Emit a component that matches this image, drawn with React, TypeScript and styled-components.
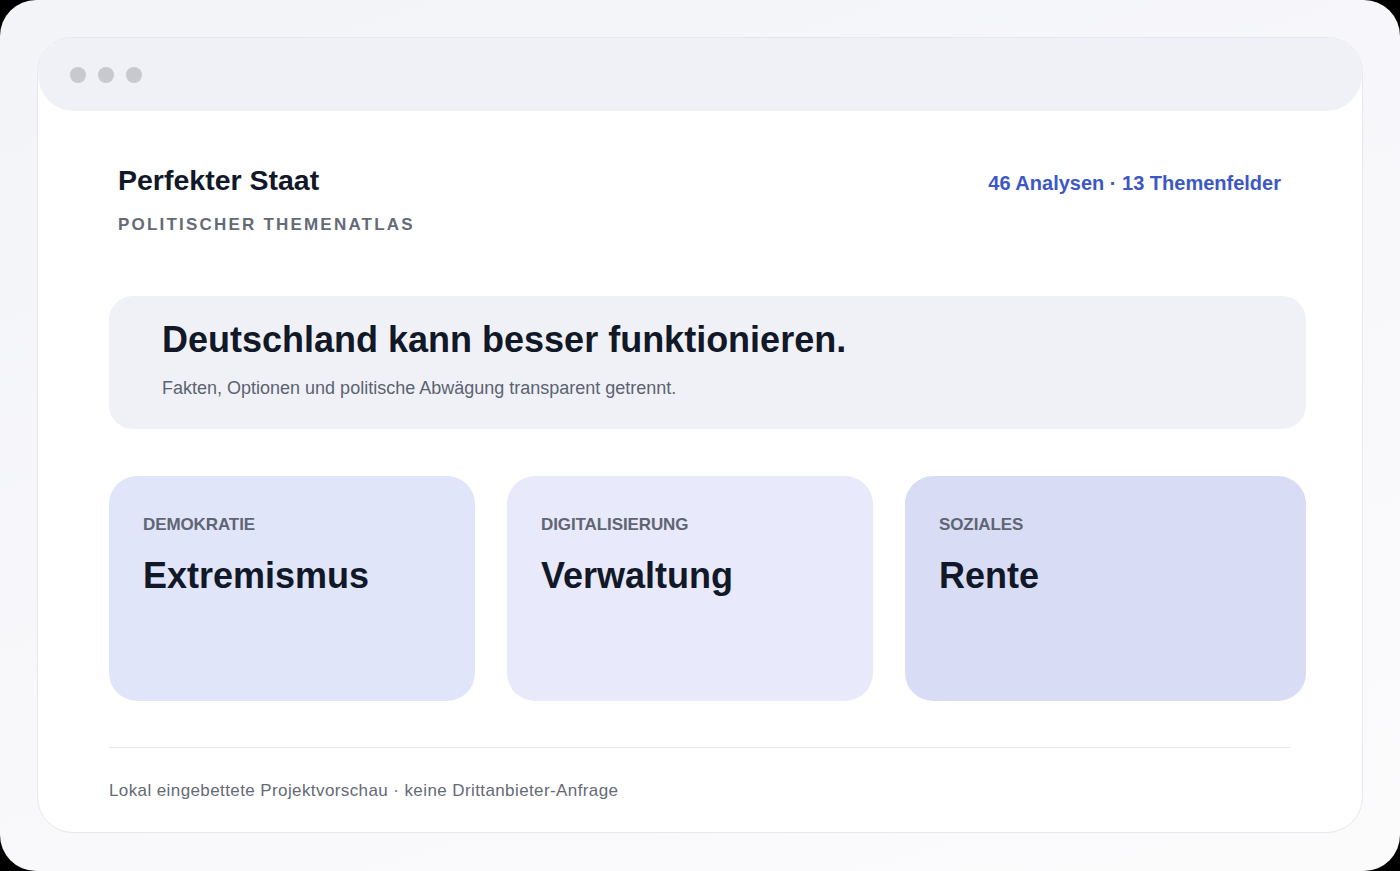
import styled, { createGlobalStyle } from "styled-components";

const TOPICS = [
  { id: 1, area: "Demokratie", title: "Extremismus", tone: "#e0e5fa" },
  { id: 2, area: "Digitalisierung", title: "Verwaltung", tone: "#e8e9fa" },
  { id: 3, area: "Soziales", title: "Rente", tone: "#d8dcf5" },
];

const GlobalStyle = createGlobalStyle`
  html, body {
    margin: 0;
    padding: 0;
    background: #000;
  }
  body {
    font-family: "Liberation Sans", Arial, sans-serif;
  }
  * {
    box-sizing: border-box;
  }
`;

const Frame = styled("div")`
  width: 1400px;
  height: 871px;
  border-radius: 36px;
  background: linear-gradient(160deg, #f3f4f8 0%, #f8f8fb 55%, #fbfbfc 100%);
  padding: 37px 37px 38px 37px;
`;

const Window = styled("div")`
  height: 100%;
  background: #ffffff;
  border: 1px solid #e6e8ee;
  border-radius: 36px;
  display: flex;
  flex-direction: column;
`;

const TitleBar = styled("div")`
  height: 73px;
  flex-shrink: 0;
  background: #f0f1f6;
  border-radius: 36px;
  display: flex;
  align-items: center;
  gap: 12px;
  padding-left: 32px;
`;

const Dot = styled("span")`
  width: 16px;
  height: 16px;
  border-radius: 50%;
  background: #c7c9cf;
`;

const Content = styled("div")`
  flex: 1;
  padding: 52px 56px 0 71px;
  display: flex;
  flex-direction: column;
`;

const Header = styled("header")`
  display: flex;
  justify-content: space-between;
  align-items: flex-start;
  padding: 0 25px 0 9px;
`;

const Brand = styled("div")`
  display: flex;
  flex-direction: column;
`;

const BrandName = styled("h1")`
  margin: 0;
  font-size: 28.5px;
  line-height: 34px;
  font-weight: 700;
  color: #111827;
`;

const BrandTag = styled("div")`
  margin-top: 18px;
  font-size: 17px;
  line-height: 20px;
  font-weight: 700;
  letter-spacing: 2.2px;
  color: #646a76;
`;

const Stats = styled("div")`
  margin-top: 5px;
  font-size: 20px;
  line-height: 30px;
  font-weight: 700;
  color: #3d58c6;
`;

const Hero = styled("section")`
  margin-top: 61px;
  background: #f0f1f6;
  border-radius: 24px;
  padding: 23px 53px 27px;
`;

const HeroTitle = styled("h2")`
  margin: 0;
  font-size: 36px;
  line-height: 41px;
  font-weight: 700;
  color: #111827;
`;

const HeroText = styled("p")`
  margin: 15px 0 0;
  font-size: 18px;
  line-height: 27px;
  color: #5b6271;
`;

const Cards = styled("div")`
  margin-top: 47px;
  display: grid;
  grid-template-columns: 366px 366px 1fr;
  gap: 32px;
`;

const Card = styled("div")<{ $tone: string }>`
  height: 225px;
  border-radius: 28px;
  background: ${(p) => p.$tone};
  padding: 38px 34px;
`;

const CardArea = styled("div")`
  font-size: 17px;
  line-height: 22px;
  font-weight: 700;
  letter-spacing: -0.1px;
  text-transform: uppercase;
  color: #5f6573;
`;

const CardTitle = styled("div")`
  margin-top: 20px;
  font-size: 36px;
  line-height: 40px;
  font-weight: 700;
  color: #111827;
`;

const Divider = styled("hr")`
  margin: 46px 16px 0 0;
  border: none;
  border-top: 1.5px solid #e6e8ec;
`;

const Footer = styled("footer")`
  margin-top: 32px;
  font-size: 17px;
  line-height: 22px;
  letter-spacing: 0.4px;
  color: #646a76;
`;

export default function App() {
  return (
    <>
      <GlobalStyle />
      <Frame>
        <Window>
          <TitleBar>
            <Dot />
            <Dot />
            <Dot />
          </TitleBar>
          <Content>
            <Header>
              <Brand>
                <BrandName>Perfekter Staat</BrandName>
                <BrandTag>POLITISCHER THEMENATLAS</BrandTag>
              </Brand>
              <Stats>46 Analysen · 13 Themenfelder</Stats>
            </Header>
            <Hero>
              <HeroTitle>Deutschland kann besser funktionieren.</HeroTitle>
              <HeroText>
                Fakten, Optionen und politische Abwägung transparent getrennt.
              </HeroText>
            </Hero>
            <Cards>
              {TOPICS.map((topic) => (
                <Card key={topic.id} $tone={topic.tone}>
                  <CardArea>{topic.area}</CardArea>
                  <CardTitle>{topic.title}</CardTitle>
                </Card>
              ))}
            </Cards>
            <Divider />
            <Footer>
              Lokal eingebettete Projektvorschau · keine Drittanbieter-Anfrage
            </Footer>
          </Content>
        </Window>
      </Frame>
    </>
  );
}
